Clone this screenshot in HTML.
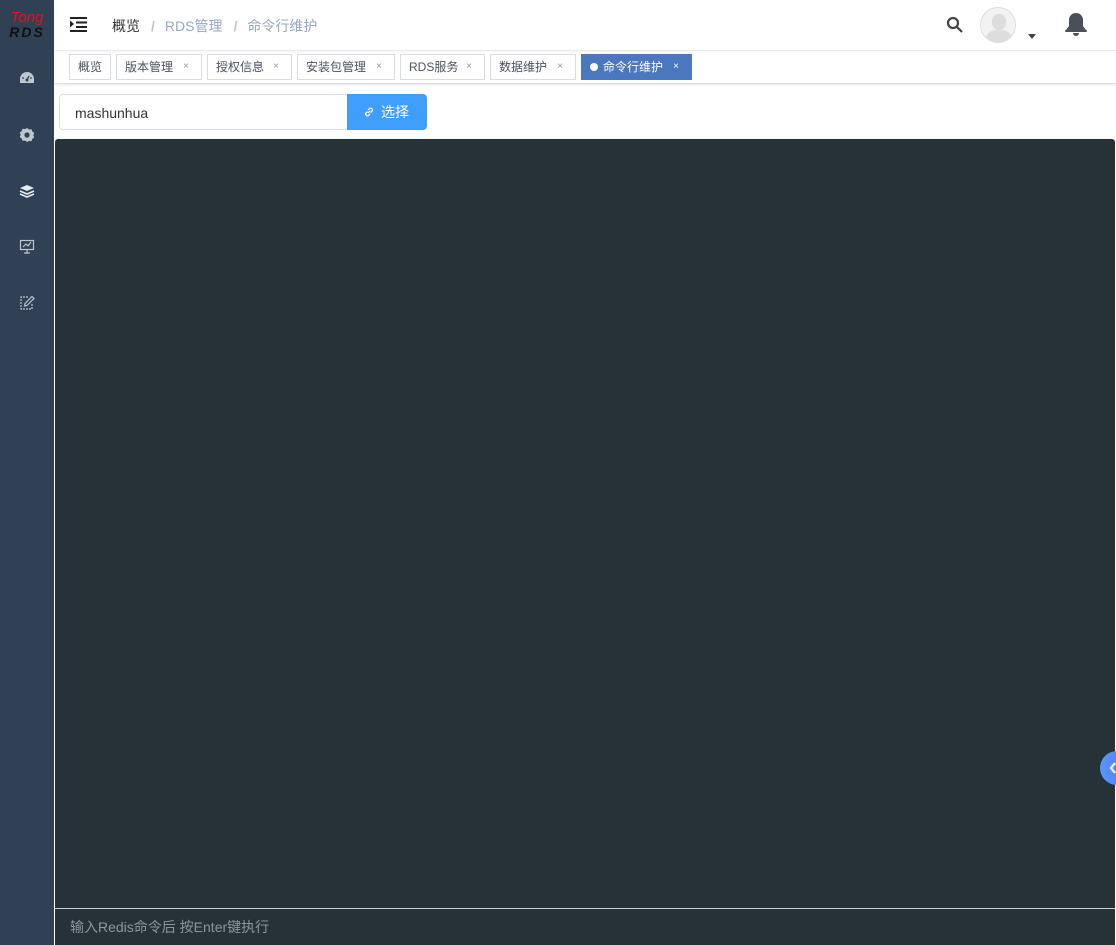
<!DOCTYPE html>
<html><head><meta charset="utf-8"><style>
*{margin:0;padding:0;box-sizing:border-box}
body{width:1116px;height:945px;overflow:hidden;background:#fff;font-family:"Liberation Sans","Noto Sans CJK SC",sans-serif;position:relative}
.side{position:absolute;left:0;top:0;width:54px;height:945px;background:#304156}
.logo{position:absolute;left:0;top:10px;width:54px;text-align:center;line-height:15px}
.logo .t{color:#e0141e;font-style:italic;font-size:15px;font-family:"Liberation Sans",sans-serif}
.logo .r{color:#111;font-style:italic;font-weight:bold;font-size:14px;letter-spacing:2px}
.ic{position:absolute;left:19px}
.hdr{position:absolute;left:55px;top:0;right:0;height:51px;border-bottom:1px solid #eee;box-shadow:0 1px 3px rgba(0,0,0,.05)}
.bc{position:absolute;left:112px;top:16px;font-size:14px;color:#97a8be}
.bc b{font-weight:normal;color:#303133}
.bc i{font-style:normal;color:#c0c4cc;margin:0 10px 0 11px;font-weight:bold}
.tags{position:absolute;left:55px;top:51px;right:0;height:33px;border-bottom:1px solid #d8dce5;box-shadow:0 1px 3px rgba(0,0,0,.1)}
.tag{position:absolute;top:54px;height:26px;border:1px solid #d8dce5;font-size:12px;color:#495060;line-height:24px;padding-left:8px;background:#fff}
.tag .x{position:absolute;right:12px;font-size:10px;color:#999}
.tag.a{background:#4a77bd;border-color:#4a77bd;color:#fff}
.tag.a .x{color:#fff}
.inp{position:absolute;left:59px;top:94px;width:289px;height:36px;border:1px solid #dcdfe6;border-radius:4px 0 0 4px;font-size:14px;color:#303133;padding:10px 15px;line-height:16px}
.btn{position:absolute;left:347px;top:94px;width:80px;height:36px;background:#409eff;border-radius:0 4px 4px 0;color:#fff;font-size:14px;line-height:36px;padding-left:16px}
.term{position:absolute;left:55px;top:139px;width:1060px;height:806px;background:#263238;border-radius:3px 3px 0 0}
.cmd{position:absolute;left:55px;top:908px;width:1060px;height:37px;background:#263238;border-top:1px solid #cfd3d6;color:#8d969c;font-size:14px;line-height:36px;padding-left:15px}
.fab{position:absolute;left:1100px;top:751px;width:34px;height:34px;border-radius:17px;background:linear-gradient(90deg,#5b95ff,#3f7ef5)}
</style></head><body>
<div class="side">
<div class="logo"><div class="t">Tong</div><div class="r">RDS</div></div>
<svg class="ic" style="top:71px" width="16" height="14" viewBox="0 0 16 14"><path d="M8 1a7 7 0 0 0-7 7v4h14V8a7 7 0 0 0-7-7z" fill="#c0c6ce"/><circle cx="8" cy="9" r="1.5" fill="#304156"/><path d="M8 9l2-4" stroke="#304156" stroke-width="1.3"/><circle cx="4" cy="7" r=".9" fill="#304156"/><circle cx="12" cy="7" r=".9" fill="#304156"/></svg>
<svg class="ic" style="top:127px" width="16" height="16" viewBox="0 0 16 16"><path d="M8 1l2 1.5 2.5-.3.8 2.3 2 1.5-1 2.2 1 2.2-2 1.5-.8 2.3-2.5-.3L8 15l-2-1.5-2.5.3-.8-2.3-2-1.5 1-2.2-1-2.2 2-1.5.8-2.3 2.5.3z" fill="#c0c6ce"/><circle cx="8" cy="8" r="2.6" fill="#304156"/></svg>
<svg class="ic" style="top:184px" width="16" height="14" viewBox="0 0 16 14"><path d="M8 1l7 3-7 3-7-3z" fill="#e8ebee"/><path d="M1 7l7 3 7-3M1 10l7 3 7-3" stroke="#e8ebee" stroke-width="1.6" fill="none"/></svg>
<svg class="ic" style="top:239px" width="16" height="16" viewBox="0 0 16 16" fill="none" stroke="#c0c6ce" stroke-width="1.2"><rect x="1.5" y="1.5" width="13" height="9"/><path d="M4 8l3-3 2 2 3-4M8 10.5v3M5 14h6"/></svg>
<svg class="ic" style="top:295px" width="16" height="16" viewBox="0 0 16 16" fill="none" stroke="#c0c6ce" stroke-width="1.2"><path d="M9 2H2v12h11V8" stroke-dasharray="2 1"/><path d="M13 1.5l2 2-7 7-2.5.5.5-2.5z"/></svg>
</div>
<div class="hdr">
<svg style="position:absolute;left:15px;top:17px" width="18" height="15" viewBox="0 0 18 15" fill="#222"><rect x="0" y="0" width="17" height="2"/><rect x="6" y="4.5" width="11" height="2"/><rect x="6" y="9" width="11" height="2"/><rect x="0" y="13" width="17" height="2"/><path d="M0 3.5l4 3.5-4 3.5z"/></svg>
</div>
<div class="bc"><b>概览</b><i>/</i>RDS管理<i>/</i>命令行维护</div>
<svg style="position:absolute;left:946px;top:16px" width="18" height="18" viewBox="0 0 18 18" fill="none" stroke="#444" stroke-width="2.2"><circle cx="7" cy="7" r="5"/><path d="M11 11l5 5"/></svg>
<div style="position:absolute;left:980px;top:7px;width:36px;height:36px;border-radius:18px;border:1px solid #ddd;background:#f2f2f2;overflow:hidden"><div style="position:absolute;left:11px;top:6px;width:14px;height:16px;border-radius:7px;background:#ddd"></div><div style="position:absolute;left:5px;top:22px;width:26px;height:20px;border-radius:12px;background:#ddd"></div></div>
<div style="position:absolute;left:1028px;top:34px;border:4px solid transparent;border-top:5px solid #444;border-bottom:0"></div>
<svg style="position:absolute;left:1065px;top:12px" width="22" height="25" viewBox="0 0 22 25" fill="#4a4f5a"><path d="M11 1c-4 0-7 3-7 7v6l-3 4h20l-3-4V8c0-4-3-7-7-7z"/><rect x="0" y="18" width="22" height="2" rx="1"/><path d="M8 21h6a3 3 0 0 1-6 0z"/></svg>
<div class="tags"></div>
<div class="tag" style="left:69px;width:42px">概览</div>
<div class="tag" style="left:116px;width:86px">版本管理<span class="x">×</span></div>
<div class="tag" style="left:207px;width:85px">授权信息<span class="x">×</span></div>
<div class="tag" style="left:297px;width:98px">安装包管理<span class="x">×</span></div>
<div class="tag" style="left:400px;width:85px">RDS服务<span class="x">×</span></div>
<div class="tag" style="left:490px;width:86px">数据维护<span class="x">×</span></div>
<div class="tag a" style="left:581px;width:111px"><span style="display:inline-block;width:8px;height:8px;border-radius:4px;background:#fff;margin-right:5px"></span>命令行维护<span class="x">×</span></div>
<div class="inp">mashunhua</div>
<div class="btn"><svg width="12" height="12" viewBox="0 0 12 12" fill="none" stroke="#fff" stroke-width="1.3" style="vertical-align:-1px;margin-right:6px"><path d="M5 7l2-2M4.5 5.5L3 7a1.8 1.8 0 0 0 2.5 2.5l1.5-1.5M7.5 6.5L9 5a1.8 1.8 0 0 0-2.5-2.5L5 4"/></svg>选择</div>
<div class="term"></div>
<div class="cmd">输入Redis命令后 按Enter键执行</div>
<div class="fab"><svg style="position:absolute;left:9px;top:10px" width="8" height="14" viewBox="0 0 8 14" fill="none" stroke="#fff" stroke-width="2.2"><path d="M6 2L2 7l4 5"/></svg></div>
</body></html>
